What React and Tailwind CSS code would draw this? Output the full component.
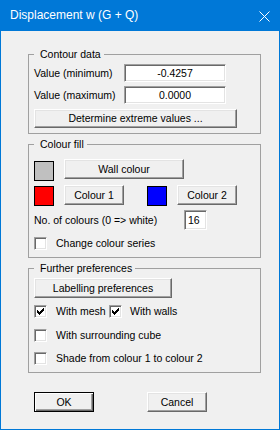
import { useState } from "react";

const font = "font-['Liberation_Sans',Arial,sans-serif]";
const txt = "text-[10.5px] leading-[13px] text-black";
const raised =
  "border border-t-white border-l-white border-r-[#696969] border-b-[#696969] shadow-[inset_-1px_-1px_0_#a0a0a0,inset_1px_1px_0_#e3e3e3] bg-[#f0f0f0]";
const sunken =
  "border border-t-[#a0a0a0] border-l-[#a0a0a0] border-r-white border-b-white shadow-[inset_1px_1px_0_#696969,inset_-1px_-1px_0_#e3e3e3] bg-white";

function Btn({ className = "", children }) {
  return (
    <button type="button" className={`${raised} ${txt} flex items-center justify-center ${className}`}>
      {children}
    </button>
  );
}

function Field({ value, className = "", align = "text-center" }) {
  return (
    <div className={`${sunken} ${txt} flex items-center ${align} ${className}`}>
      <span className="w-full">{value}</span>
    </div>
  );
}

function Check({ checked, onClick }) {
  return (
    <div onClick={onClick} className={`${sunken} w-[13px] h-[13px] shrink-0 relative`}>
      {checked && (
        <svg width="13" height="13" viewBox="0 0 13 13" className="absolute left-[-1px] top-[-1px]" shapeRendering="crispEdges">
          <rect x="3" y="5" width="1" height="3" fill="#000" />
          <rect x="4" y="6" width="1" height="3" fill="#000" />
          <rect x="5" y="7" width="1" height="3" fill="#000" />
          <rect x="6" y="6" width="1" height="3" fill="#000" />
          <rect x="7" y="5" width="1" height="3" fill="#000" />
          <rect x="8" y="4" width="1" height="3" fill="#000" />
          <rect x="9" y="3" width="1" height="3" fill="#000" />
        </svg>
      )}
    </div>
  );
}

function Group({ title, className = "", children }) {
  return (
    <fieldset className={`border border-[#a0a0a0] pl-[5px] pr-[5px] ${className}`}>
      <legend className={`pl-[6px] pr-[3px] ${txt}`}>{title}</legend>
      {children}
    </fieldset>
  );
}

export default function App() {
  const [opts, setOpts] = useState({
    series: false,
    mesh: true,
    walls: true,
    cube: false,
    shade: false,
  });
  const toggle = (k) => setOpts((o) => ({ ...o, [k]: !o[k] }));

  return (
    <div className={`${font} w-[280px] h-[430px] bg-[#0078d7] flex flex-col px-px pb-px`}>
      {/* Title bar */}
      <div className="h-[31px] -mx-px flex items-center justify-between pl-[10px] pr-[10px] shrink-0">
        <span className="text-white text-[12px] leading-[15px]">Displacement w (G + Q)</span>
        <svg width="11" height="11" viewBox="0 0 11 11" className="mt-[1px]">
          <path d="M0.5 0.5 L10.5 10.5 M10.5 0.5 L0.5 10.5" stroke="#fff" strokeWidth="1" />
        </svg>
      </div>

      {/* Body */}
      <div className="flex-1 bg-[#f0f0f0] pt-[17px] pl-[27px] pr-[18px]">
        <Group title="Contour data" className="pt-[3px] pb-[5px]">
          <div className="flex items-center h-[18px]">
            <span className={`w-[90px] ${txt}`}>Value (minimum)</span>
            <Field value="-0.4257" className="w-[102px] h-[18px]" />
          </div>
          <div className="flex items-center h-[18px] mt-[4px]">
            <span className={`w-[90px] ${txt}`}>Value (maximum)</span>
            <Field value="0.0000" className="w-[102px] h-[18px]" />
          </div>
          <Btn className="w-[203px] h-[19px] mt-[5px]">Determine extreme values ...</Btn>
        </Group>

        <Group title="Colour fill" className="mt-[4px] pt-[8px] pb-[7px]">
          <div className="flex items-start">
            <div className="w-[20px] h-[20px] mt-[2px] border border-black bg-[#c0c0c0]" />
            <Btn className="w-[120px] h-[20px] ml-[10px]">Wall colour</Btn>
          </div>
          <div className="flex items-start mt-[4px]">
            <div className="w-[20px] h-[20px] mt-[1px] border border-black bg-[#ff0000]" />
            <Btn className="w-[60px] h-[20px] ml-[10px]">Colour 1</Btn>
            <div className="w-[20px] h-[20px] mt-[1px] ml-[23px] border border-black bg-[#0000ff]" />
            <Btn className="w-[60px] h-[20px] ml-[10px]">Colour 2</Btn>
          </div>
          <div className="flex items-center mt-[4px]">
            <span className={`w-[150px] ${txt}`}>No. of colours (0 =&gt; white)</span>
            <Field value="16" align="text-left pl-[3px]" className="w-[23px] h-[20px]" />
          </div>
          <div className={`flex items-center mt-[7px] ${txt}`}>
            <Check checked={opts.series} onClick={() => toggle("series")} />
            <span className="ml-[9px]">Change colour series</span>
          </div>
        </Group>

        <Group title="Further preferences" className="mt-[4px] pt-[3px] pb-[7px]">
          <Btn className="w-[138px] h-[20px]">Labelling preferences</Btn>
          <div className={`flex items-center mt-[7px] ${txt}`}>
            <div className="w-[75px] flex items-center">
              <Check checked={opts.mesh} onClick={() => toggle("mesh")} />
              <span className="ml-[9px]">With mesh</span>
            </div>
            <Check checked={opts.walls} onClick={() => toggle("walls")} />
            <span className="ml-[8px]">With walls</span>
          </div>
          <div className={`flex items-center mt-[11px] ${txt}`}>
            <Check checked={opts.cube} onClick={() => toggle("cube")} />
            <span className="ml-[9px]">With surrounding cube</span>
          </div>
          <div className={`flex items-center mt-[10px] ${txt}`}>
            <Check checked={opts.shade} onClick={() => toggle("shade")} />
            <span className="ml-[9px]">Shade from colour 1 to colour 2</span>
          </div>
        </Group>

        <div className="flex mt-[19px] pl-[6px]">
          <button
            type="button"
            className={`w-[60px] h-[20px] border border-black bg-[#f0f0f0] shadow-[inset_1px_1px_0_#fff,inset_-1px_-1px_0_#696969,inset_-2px_-2px_0_#a0a0a0] ${txt}`}
          >
            OK
          </button>
          <Btn className="w-[60px] h-[20px] ml-[53px]">Cancel</Btn>
        </div>
      </div>
    </div>
  );
}
